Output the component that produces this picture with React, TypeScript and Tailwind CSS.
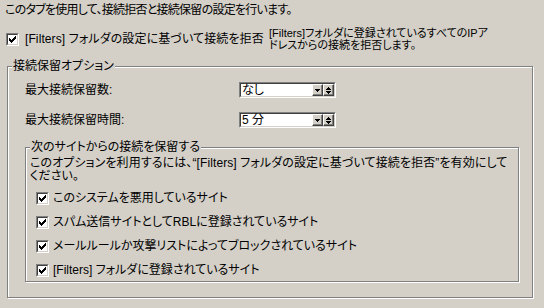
import React from "react";

type GroupProps = {
  title: string;
  className?: string;
  children: React.ReactNode;
};

// etched frame like the classic Windows group box
function GroupBox({ title, className, children }: GroupProps) {
  return (
    <div
      className={`relative border border-[#808080] shadow-[inset_1px_1px_0_#ffffff,1px_1px_0_#ffffff] ${
        className || ""
      }`.trim()}
    >
      <span className="absolute left-[4px] -top-[7px] bg-[#d4d0c8] px-[1px] leading-[12px]">
        {title}
      </span>
      {children}
    </div>
  );
}

function CheckBox() {
  return (
    <div className="w-[13px] h-[13px] shrink-0 border border-t-[#808080] border-l-[#808080] border-b-white border-r-white">
      <div className="w-full h-full border border-t-[#404040] border-l-[#404040] border-b-[#d4d0c8] border-r-[#d4d0c8] bg-white flex items-center justify-center">
        <svg width="7" height="7" viewBox="0 0 7 7" shapeRendering="crispEdges">
          <path
            fill="#000"
            d="M6 0h1v3h-1zM5 1h1v3h-1zM4 2h1v3h-1zM3 3h1v3h-1zM2 4h1v3h-1zM1 3h1v3h-1zM0 2h1v3h-1z"
          />
        </svg>
      </div>
    </div>
  );
}

function Arrow({ up }: { up?: boolean }) {
  return (
    <svg width="5" height="3" viewBox="0 0 5 3" shapeRendering="crispEdges">
      <path
        fill="#000"
        d={up ? "M2 0h1v1h-1zM1 1h3v1h-3zM0 2h5v1h-5z" : "M0 0h5v1h-5zM1 1h3v1h-3zM2 2h1v1h-1z"}
      />
    </svg>
  );
}

function TinyButton({ children }: { children: React.ReactNode }) {
  return (
    <div className="w-[11px] h-full bg-[#d4d0c8] border border-t-white border-l-white border-b-[#404040] border-r-[#404040] shadow-[inset_-1px_-1px_0_#808080] flex flex-col items-center justify-center gap-[1px]">
      {children}
    </div>
  );
}

function Combo({ value }: { value: string }) {
  return (
    <div className="w-[97px] h-[16px] border border-t-[#808080] border-l-[#808080] border-b-white border-r-white">
      <div className="w-full h-full flex border border-t-[#404040] border-l-[#404040] border-b-[#d4d0c8] border-r-[#d4d0c8] bg-white">
        <div className="flex-1 pl-[1px] leading-[12px]">{value}</div>
        <TinyButton>
          <Arrow />
        </TinyButton>
        <TinyButton>
          <Arrow up />
          <Arrow />
        </TinyButton>
      </div>
    </div>
  );
}

const sites = [
  "このシステムを悪用しているサイト",
  "スパム送信サイトとしてRBLに登録されているサイト",
  "メールルールか攻撃リストによってブロックされているサイト",
  "[Filters] フォルダに登録されているサイト",
];

export default function App() {
  return (
    <div className="w-[544px] h-[308px] overflow-hidden bg-[#d4d0c8] text-black text-[12px] font-['Liberation_Sans','Noto_Sans_CJK_JP',sans-serif] [font-feature-settings:'palt']">
      <p className="ml-[5px] pt-[4px] leading-[12px] tracking-[-0.75px]">
        このタブを使用して、接続拒否と接続保留の設定を行います。
      </p>

      <div className="flex mt-[12px]">
        <div className="w-[269px] h-[22px] pl-[6px] flex items-center gap-[6px]">
          <CheckBox />
          <span className="leading-[12px] tracking-[0.1px]">[Filters] フォルダの設定に基づいて接続を拒否</span>
        </div>
        <div className="leading-[12px] text-[11px] -mt-[1px]">
          <div>[Filters]フォルダに登録されているすべてのIPア</div>
          <div>ドレスからの接続を拒否します。</div>
        </div>
      </div>

      <GroupBox title="接続保留オプション" className="ml-[7px] mt-[15px] w-[526px] h-[232px]">
        <div className="pt-[15px] pl-[17px]">
          <div className="flex items-center h-[16px]">
            <span className="w-[214px]">最大接続保留数:</span>
            <Combo value="なし" />
          </div>
          <div className="flex items-center h-[16px] mt-[14px]">
            <span className="w-[214px]">最大接続保留時間:</span>
            <Combo value="5 分" />
          </div>

          <GroupBox title="次のサイトからの接続を保留する" className="mt-[19px] w-[494px] h-[135px]">
            <div className="pt-[9px] pl-[4px]">
              <p className="leading-[13px] tracking-[0.1px]">
                このオプションを利用するには、“[Filters] フォルダの設定に基づいて接続を拒否”を有効にして
                <br />
                ください。
              </p>
              <div className="mt-[3px] pl-[6px]">
                {sites.map((s) => (
                  <div key={s} className="h-[24px] flex items-center gap-[4px]">
                    <CheckBox />
                    <span className="leading-[12px]">{s}</span>
                  </div>
                ))}
              </div>
            </div>
          </GroupBox>
        </div>
      </GroupBox>
    </div>
  );
}
